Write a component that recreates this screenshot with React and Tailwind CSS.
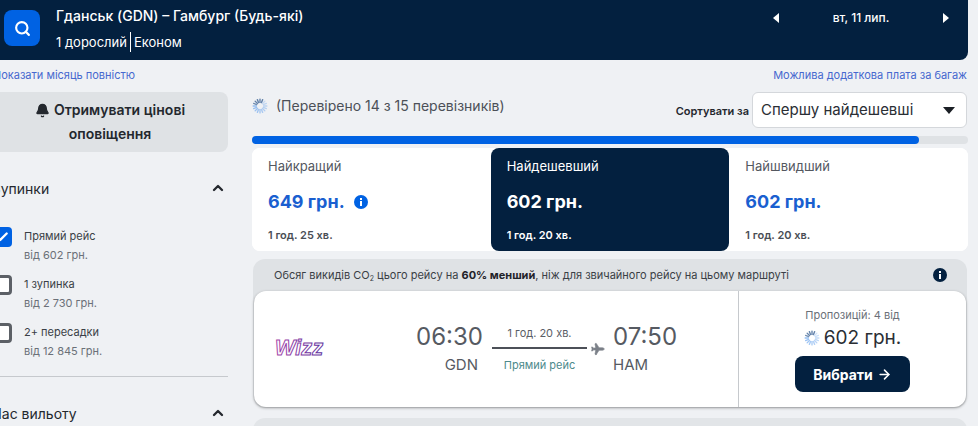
import React from "react";
import { Search, Bell, ChevronUp, Check, ArrowRight, Plane, Info } from "lucide-react";

const F = { fontFamily: "Inter, 'Noto Sans', sans-serif" };

function Spinner({ size = 16 }) {
  const n = 16;
  return (
    <svg width={size} height={size} viewBox="0 0 32 32" className="shrink-0">
      {Array.from({ length: n }).map((_, i) => {
        const a = (i / n) * 360;
        const o = i < 2 || i > 13 ? 0.85 : 0.25 + 0.04 * i;
        return (
          <rect key={i} x="14.6" y="1" width="2.8" height="9" rx="1.2" fill={i > 12 || i < 2 ? "#4a6f9c" : "#6fa8ee"} opacity={o} transform={`rotate(${a} 16 16)`} />
        );
      })}
    </svg>
  );
}

function WizzLogo() {
  return (
    <svg width="50" height="24" viewBox="0 0 50 24" className="shrink-0">
      <defs>
        <linearGradient id="wz" x1="0" x2="1">
          <stop offset="0" stopColor="#a23fa8" />
          <stop offset="1" stopColor="#5b2d9c" />
        </linearGradient>
      </defs>
      <text x="0" y="19" fontFamily="Liberation Sans, sans-serif" fontStyle="italic" fontWeight="700" fontSize="22" textLength="48" lengthAdjust="spacingAndGlyphs" fill="#fff" stroke="url(#wz)" strokeWidth="1">Wizz</text>
    </svg>
  );
}

function Stop({ label, price, checked }) {
  return (
    <div className="flex h-[48px]">
      <div className={`mt-[1px] w-5 h-5 rounded-[4px] shrink-0 flex items-center justify-center ${checked ? "bg-[#0062e3]" : "border-[3px] border-[#5c6066] bg-white"}`}>
        {checked && <Check size={14} strokeWidth={4} className="text-white" />}
      </div>
      <div className="ml-3">
        <div className="text-[11px] leading-[20px] text-[#3a3f46]">{label}</div>
        <div className="text-[11px] leading-[18px] text-[#6b7078]">{price}</div>
      </div>
    </div>
  );
}

function Tab({ title, price, time, active, info }) {
  return (
    <div className={`flex-1 h-full rounded-lg pl-4 pt-[9px] ${active ? "bg-[#03203f] text-white" : "bg-white text-[#54585f]"}`}>
      <div className="text-[13px] leading-[18px]">{title}</div>
      <div className={`mt-[15px] flex items-center gap-[9px] text-[18px] leading-[24px] font-bold ${active ? "text-white" : "text-[#1a5fd0]"}`}>
        {price}
        {info && (
          <svg width="14" height="14" viewBox="0 0 14 14"><circle cx="7" cy="7" r="7" fill="#0062e3" /><rect x="6" y="6" width="2" height="5" fill="#fff" /><rect x="6" y="3" width="2" height="2" fill="#fff" /></svg>
        )}
      </div>
      <div className={`mt-[13px] text-[11px] leading-[16px] font-semibold ${active ? "text-white" : "text-[#4a4e55]"}`}>{time}</div>
    </div>
  );
}

export default function App() {
  return (
    <div style={F} className="w-[978px] h-[426px] overflow-hidden bg-[#eff1f4]">
      <header className="w-[968px] h-[60px] bg-[#03203f] rounded-br-lg text-white flex items-start">
        <div className="ml-1 mt-[10px] w-9 h-9 rounded-lg bg-[#0062e3] flex items-center justify-center">
          <Search size={17} strokeWidth={3} />
        </div>
        <div className="ml-4 mt-[6px]">
          <div className="text-[14px] leading-5 font-medium whitespace-nowrap">Гданськ (GDN) – Гамбург (Будь-які)</div>
          <div className="mt-[6px] flex items-center text-[13px] leading-5 whitespace-nowrap">
            <span>1 дорослий</span>
            <span className="w-px h-5 bg-white mx-[3px]" />
            <span>Економ</span>
          </div>
        </div>
        <div className="ml-auto mt-[8px] w-[176px] mr-[19px] flex items-center justify-between">
          <svg width="7" height="10" viewBox="0 0 7 10"><path d="M6 0v10L0 5z" fill="#fff" /></svg>
          <span className="text-[12px] leading-5 font-medium">вт, 11 лип.</span>
          <svg width="7" height="10" viewBox="0 0 7 10"><path d="M1 0v10l6-5z" fill="#fff" /></svg>
        </div>
      </header>

      <div className="flex items-center justify-between w-[967px] h-8 text-[11px] text-[#4668cf] -mt-px">
        <span className="-ml-[7px] whitespace-nowrap">Показати місяць повністю</span>
        <span>Можлива додаткова плата за багаж</span>
      </div>

      <div className="flex -ml-2 w-[976px] gap-6 mt-px">
        <aside className="w-[236px] shrink-0">
          <div className="h-[60px] rounded-lg bg-[#dfe2e5] flex flex-col items-center justify-center text-[14px] leading-[24px] font-semibold text-[#24282e]">
            <div className="flex items-center gap-1"><Bell size={15} fill="#24282e" />Отримувати цінові</div>
            <div>оповіщення</div>
          </div>
          <div className="mt-[26px] h-5 flex items-center justify-between pr-[2px] text-[14px] text-[#24282e]">
            <span>Зупинки</span>
            <ChevronUp size={16} strokeWidth={3.5} />
          </div>
          <div className="mt-[28px]">
            <Stop label="Прямий рейс" price="від 602 грн." checked />
            <Stop label="1 зупинка" price="від 2 730 грн." />
            <Stop label="2+ пересадки" price="від 12 845 грн." />
          </div>
          <div className="mt-[6px] h-px bg-[#c6c9cd]" />
          <div className="mt-[26px] h-5 flex items-center justify-between pr-[2px] text-[14px] text-[#24282e]">
            <span>Час вильоту</span>
            <ChevronUp size={16} strokeWidth={3.5} />
          </div>
        </aside>

        <main className="w-[716px] shrink-0">
          <div className="h-[36px] flex items-start">
            <div className="flex items-center">
              <Spinner />
              <span className="ml-2 mt-[8px] -translate-y-[4px] text-[14px] leading-5 text-[#4c5058] whitespace-nowrap">(Перевірено 14 з 15 перевізників)</span>
            </div>
            <div className="ml-auto flex items-center">
              <span className="text-[11px] font-semibold text-[#24282e] mr-[3px] mt-[2px]">Сортувати за</span>
              <div className="w-[215px] h-9 bg-white rounded-md border border-[#d4d7db] pl-2 pr-[11px] flex items-center justify-between text-[15px] text-[#2a2e34] mr-px">
                <span>Спершу найдешевші</span>
                <svg width="12" height="7" viewBox="0 0 12 7"><path d="M0 0h12L6 7z" fill="#1b1f25" /></svg>
              </div>
            </div>
          </div>

          <div className="mt-2 h-2 rounded-full bg-[#dfe2e5]">
            <div className="h-2 w-[667px] rounded-full bg-[#0062e3]" />
          </div>

          <div className="mt-1 h-[103px] flex bg-white rounded-lg">
            <Tab title="Найкращий" price="649 грн." time="1 год. 25 хв." info />
            <Tab title="Найдешевший" price="602 грн." time="1 год. 20 хв." active />
            <Tab title="Найшвидший" price="602 грн." time="1 год. 20 хв." />
          </div>

          <div className="mt-2 ml-px mr-px h-[149px] rounded-xl bg-[#dfe2e5] px-px pb-px flex flex-col">
            <div className="h-8 shrink-0 pl-[20px] pr-[19px] flex items-center justify-between text-[11px] text-[#3a3f46]">
              <span>Обсяг викидів CO<sub className="text-[7px]">2</sub> цього рейсу на <b className="font-bold text-[#1f2329]">60% менший</b>, ніж для звичайного рейсу на цьому маршруті</span>
              <svg width="14" height="14" viewBox="0 0 14 14"><circle cx="7" cy="7" r="7" fill="#03203f" /><rect x="6" y="6" width="2" height="5" fill="#fff" /><rect x="6" y="3" width="2" height="2" fill="#fff" /></svg>
            </div>
            <div className="flex-1 bg-white rounded-xl shadow-[0_1px_3px_rgba(0,0,0,0.35)] flex">
              <div className="flex-1 flex items-center relative">
                <div className="ml-[21px] -mt-[2px] w-[141px]"><WizzLogo /></div>
                <div className="w-[62px] text-right text-[#565a62]">
                  <div className="text-[24px] leading-[30px]">06:30</div>
                  <div className="text-[15px] leading-[24px] mt-[1px]">GDN</div>
                </div>
                <div className="ml-[14px] w-[95px] text-center">
                  <div className="text-[11px] leading-4 text-[#5a5e66] whitespace-nowrap">1 год. 20 хв.</div>
                  <div className="h-px border-t-2 border-[#4c5058] mt-[6px]" />
                  <div className="text-[11px] leading-4 text-[#4d8a8c] mt-[8px] whitespace-nowrap">Прямий рейс</div>
                </div>
                <div className="ml-[3px] w-[23px] flex items-center -mt-[1px]">
                  <Plane size={14} fill="#7b8088" strokeWidth={1} className="text-[#7b8088] rotate-45" />
                </div>
                <div className="text-[#565a62]">
                  <div className="text-[24px] leading-[30px]">07:50</div>
                  <div className="text-[15px] leading-[24px] mt-[1px]">HAM</div>
                </div>
              </div>
              <div className="w-[228px] shrink-0 border-l border-[#c6c9cd] flex flex-col items-center pt-[15px]">
                <div className="text-[11px] leading-[18px] text-[#6b7078]">Пропозицій: 4 від</div>
                <div className="flex items-center gap-1 text-[19px] leading-[26px] text-[#2a2e34] mt-px">
                  <Spinner />
                  602 грн.
                </div>
                <div className="mt-[5px] w-[115px] h-9 rounded-lg bg-[#03203f] text-white text-[14px] font-bold flex items-center justify-center gap-1">
                  Вибрати <ArrowRight size={15} strokeWidth={2.5} />
                </div>
              </div>
            </div>
          </div>

          <div className="mt-[10px] ml-px mr-px h-10 rounded-xl bg-[#e2e5e8]" />
        </main>
      </div>
    </div>
  );
}
